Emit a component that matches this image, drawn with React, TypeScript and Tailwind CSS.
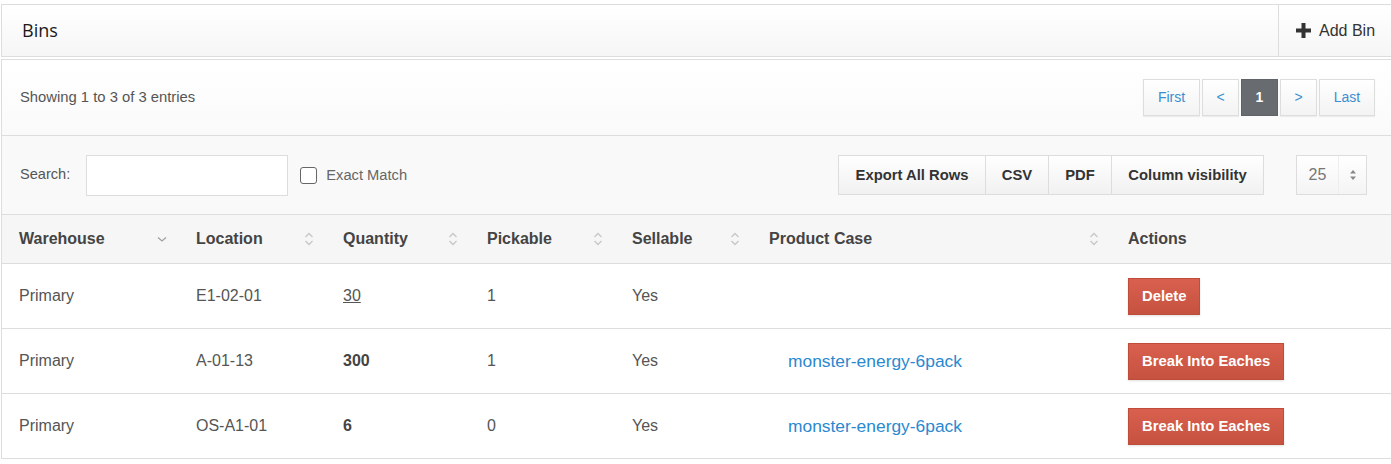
const columns = [
  { label: "Warehouse", width: "w-[177px]", sort: "desc" },
  { label: "Location", width: "w-[147px]", sort: "both" },
  { label: "Quantity", width: "w-[144px]", sort: "both" },
  { label: "Pickable", width: "w-[145px]", sort: "both" },
  { label: "Sellable", width: "w-[137px]", sort: "both" },
  { label: "Product Case", width: "w-[359px]", sort: "both" },
  { label: "Actions", width: "", sort: "none" },
];

const rows = [
  { warehouse: "Primary", location: "E1-02-01", qty: "30", qtyLink: true, pickable: "1", sellable: "Yes", product: "", action: "Delete" },
  { warehouse: "Primary", location: "A-01-13", qty: "300", qtyLink: false, pickable: "1", sellable: "Yes", product: "monster-energy-6pack", action: "Break Into Eaches" },
  { warehouse: "Primary", location: "OS-A1-01", qty: "6", qtyLink: false, pickable: "0", sellable: "Yes", product: "monster-energy-6pack", action: "Break Into Eaches" },
];

const SortIcon = ({ kind }: { kind: string }) => {
  if (kind === "none") return null;
  if (kind === "desc") {
    return (
      <svg width="10" height="10" viewBox="0 0 10 10" className="shrink-0">
        <path d="M1 3.5 L5 7 L9 3.5" fill="none" stroke="#a0a0a0" strokeWidth="1.3" />
      </svg>
    );
  }
  return (
    <svg width="10" height="14" viewBox="0 0 10 14" className="shrink-0">
      <path d="M1.5 5 L5 1.5 L8.5 5" fill="none" stroke="#c8c8c8" strokeWidth="1.4" />
      <path d="M1.5 9 L5 12.5 L8.5 9" fill="none" stroke="#c8c8c8" strokeWidth="1.4" />
    </svg>
  );
};

const PageButton = ({ label, width, active }: { label: string; width: string; active?: boolean }) => (
  <button
    className={
      active
        ? `h-[37px] ${width} border border-[#5f6367] bg-[#686c70] text-white font-bold text-[14px]`
        : `h-[37px] ${width} border border-[#ddd] bg-gradient-to-b from-white to-[#f3f3f3] text-[#3a8fd0] text-[14px] shadow-[0_1px_1px_rgba(0,0,0,0.06)]`
    }
  >
    {label}
  </button>
);

export default function App() {
  return (
    <div className="min-h-screen bg-white pt-1 font-['Liberation_Sans',Arial,sans-serif] text-[#555]">
      {/* PANEL HEADER */}
      <div className="ml-px h-[53px] flex items-stretch border-t border-b border-l border-[#ddd] bg-gradient-to-b from-white to-[#f6f6f6]">
        <h1 className="flex-1 flex items-center pl-[20px] text-[18px] text-[#1a1a1a] font-['Open_Sans',sans-serif]">
          Bins
        </h1>
        <button className="w-[113px] flex items-center gap-[8px] pl-[17px] border-l border-[#ddd] text-[16px] text-[#333]">
          <svg width="15" height="15" viewBox="0 0 15 15">
            <path d="M5.5 0 H9.5 V5.5 H15 V9.5 H9.5 V15 H5.5 V9.5 H0 V5.5 H5.5 Z" fill="#333" />
          </svg>
          Add Bin
        </button>
      </div>

      {/* PANEL BODY */}
      <div className="ml-px mt-[2px] border-t border-l border-[#ddd]">
        <div className="h-[75px] flex items-center justify-between pl-[18px] pr-[16px] bg-gradient-to-b from-white to-[#fafafa]">
          <span className="text-[14.8px] text-[#555]">Showing 1 to 3 of 3 entries</span>
          <div className="flex gap-[2px]">
            <PageButton label="First" width="w-[57px]" />
            <PageButton label="<" width="w-[37px]" />
            <PageButton label="1" width="w-[37px]" active />
            <PageButton label=">" width="w-[37px]" />
            <PageButton label="Last" width="w-[56px]" />
          </div>
        </div>

        {/* TOOLBAR */}
        <div className="h-[79px] flex items-center border-t border-[#ddd] bg-[#f9f9f9] pl-[18px] pr-[24px]">
          <label className="text-[14.6px] text-[#555]">Search:</label>
          <input className="ml-[16px] w-[202px] h-[41px] border border-[#ddd] bg-white" />
          <span className="ml-[12px] w-[17px] h-[17px] rounded-[3px] border border-[#666] bg-white" />
          <span className="ml-[9px] text-[14.7px] text-[#666]">Exact Match</span>
          <div className="flex-1" />
          <div className="flex h-[40px] border border-[#ddd] bg-gradient-to-b from-white to-[#f1f1f1] text-[14.8px] font-bold text-[#333]">
            <span className="w-[146px] flex items-center justify-center">Export All Rows</span>
            <span className="w-[63px] flex items-center justify-center border-l border-[#ddd]">CSV</span>
            <span className="w-[63px] flex items-center justify-center border-l border-[#ddd]">PDF</span>
            <span className="w-[152px] flex items-center justify-center border-l border-[#ddd]">Column visibility</span>
          </div>
          <div className="ml-[32px] flex h-[40px] w-[71px] border border-[#ddd] bg-gradient-to-b from-white to-[#f4f4f4]">
            <span className="w-[41px] flex items-center justify-center text-[16px] text-[#777]">25</span>
            <span className="flex-1 flex items-center justify-center border-l border-[#eee]">
              <svg width="8" height="14" viewBox="0 0 8 14">
                <path d="M1 5.5 L4 2 L7 5.5 Z" fill="#888" />
                <path d="M1 8.5 L4 12 L7 8.5 Z" fill="#888" />
              </svg>
            </span>
          </div>
        </div>

        {/* TABLE */}
        <table className="w-full border-collapse">
          <thead>
            <tr className="h-[49px] border-t border-b border-[#ddd] bg-[#f6f6f6]">
              {columns.map((c) => (
                <th key={c.label} className={`${c.width} pl-[17px] pr-[12px] text-left`}>
                  <div className="flex items-center justify-between text-[16px] font-bold text-[#444]">
                    {c.label}
                    <SortIcon kind={c.sort} />
                  </div>
                </th>
              ))}
            </tr>
          </thead>
          <tbody>
            {rows.map((r) => (
              <tr key={r.location} className="h-[65px] border-b border-[#ddd] text-[16px] text-[#555]">
                <td className="pl-[17px]">{r.warehouse}</td>
                <td className="pl-[17px]">{r.location}</td>
                <td className="pl-[17px]">
                  {r.qtyLink ? <span className="underline">{r.qty}</span> : <span className="font-bold text-[#444]">{r.qty}</span>}
                </td>
                <td className="pl-[17px]">{r.pickable}</td>
                <td className="pl-[17px]">{r.sellable}</td>
                <td className="pl-[36px]">
                  {r.product && <span className="text-[17.4px] text-[#2a89cf]">{r.product}</span>}
                </td>
                <td className="pl-[17px]">
                  <button className="h-[37px] px-[13px] border border-[#bf4d3c] bg-gradient-to-b from-[#d9604e] to-[#c5523f] text-white text-[14.8px] font-bold shadow-[0_1px_2px_rgba(0,0,0,0.12)]">
                    {r.action}
                  </button>
                </td>
              </tr>
            ))}
          </tbody>
        </table>
      </div>
    </div>
  );
}
